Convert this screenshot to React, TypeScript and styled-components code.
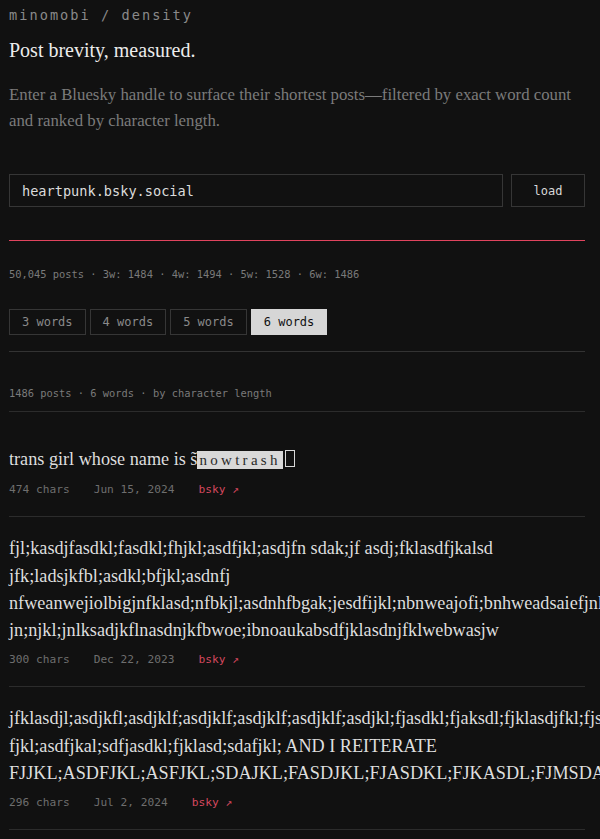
import React, { useState } from 'react';
import styled, { createGlobalStyle } from 'styled-components';

const mono = `"DejaVu Sans Mono", "Liberation Mono", monospace`;
const serif = `"Liberation Serif", "DejaVu Serif", serif`;

const GlobalStyle = createGlobalStyle`
  html, body {
    margin: 0;
    padding: 0;
    background: #111111;
    overflow-x: hidden;
  }
`;

const Page = styled.div`
  width: 576px;
  padding: 0 15px 40px 9px;
  color: #e2e2e2;
`;

const Brand = styled.div`
  font-family: ${mono};
  font-size: 13.6px;
  line-height: 20px;
  letter-spacing: 0.15em;
  color: #8a8a8a;
  margin-top: 5px;
`;

const Title = styled.h1`
  font-family: ${serif};
  font-weight: 400;
  font-size: 20px;
  line-height: 28px;
  margin: 11px 0 0;
  color: #ececec;
`;

const Intro = styled.p`
  font-family: ${serif};
  font-size: 16.8px;
  line-height: 26px;
  margin: 18px 0 0;
  color: #7b7b7b;
`;

const Form = styled.form`
  display: flex;
  gap: 8px;
  margin-top: 40px;
  height: 33px;
`;

const HandleInput = styled.input`
  flex: 1;
  box-sizing: border-box;
  background: #111111;
  border: 1px solid #363636;
  color: #dcdcdc;
  font-family: ${mono};
  font-size: 13.6px;
  padding: 0 12px;
  outline: none;
`;

const LoadButton = styled.button`
  width: 74px;
  background: #111111;
  border: 1px solid #363636;
  color: #d8d8d8;
  font-family: ${mono};
  font-size: 12px;
  cursor: pointer;
`;

const Progress = styled.div`
  height: 1px;
  background: #e0445e;
  margin-top: 33px;
`;

const Stats = styled.div<{ $top: number }>`
  font-family: ${mono};
  font-size: 10.4px;
  line-height: 16px;
  color: #7a7a7a;
  margin-top: ${(p) => p.$top}px;
`;

const Tabs = styled.div`
  display: flex;
  gap: 4px;
  margin-top: 27px;
  padding-bottom: 16px;
  border-bottom: 1px solid #333333;
`;

const Tab = styled.button<{ $active?: boolean }>`
  height: 26px;
  padding: 0 12px;
  font-family: ${mono};
  font-size: 12px;
  border: 1px solid ${(p) => (p.$active ? '#d6d6d6' : '#363636')};
  background: ${(p) => (p.$active ? '#d6d6d6' : '#111111')};
  color: ${(p) => (p.$active ? '#111111' : '#8a8a8a')};
  cursor: pointer;
`;

const Summary = styled(Stats)`
  padding-bottom: 10px;
  border-bottom: 1px solid #2c2c2c;
`;

const List = styled.div`
  padding-top: 16px;
`;

const Post = styled.article`
  padding: 18px 0;
  border-bottom: 1px solid #2c2c2c;
`;

const PostText = styled.div`
  font-family: ${serif};
  font-size: 18.2px;
  line-height: 27.3px;
  color: #dedede;
`;

// the handle renders as missing-glyph boxes in the original
const Glitch = styled.span`
  font-family: ${serif};
  font-size: 15px;
  background: #d8d8d8;
  color: #2a2a2a;
  padding: 1px 2px;
  letter-spacing: 0.22em;
`;

const Tofu = styled.span`
  display: inline-block;
  width: 8px;
  height: 15px;
  border: 1px solid #d8d8d8;
  margin-left: 2px;
  vertical-align: -2px;
`;

const Meta = styled.div`
  display: flex;
  gap: 24px;
  margin-top: 8px;
  font-family: ${mono};
  font-size: 11.2px;
  line-height: 16px;
  color: #6e6e6e;
`;

const BskyLink = styled.a`
  color: #d5485f;
  text-decoration: none;
`;

type Item = { text: React.ReactNode; chars: number; date: string };

const posts: Item[] = [
  {
    text: (
      <>
        trans girl whose name is s̃<Glitch>nowtrash</Glitch>
        <Tofu />
      </>
    ),
    chars: 474,
    date: 'Jun 15, 2024',
  },
  {
    text:
      'fjl;kasdjfasdkl;fasdkl;fhjkl;asdfjkl;asdjfn sdak;jf asdj;fklasdfjkalsd jfk;ladsjkfbl;asdkl;bfjkl;asdnfj nfweanwejiolbigjnfklasd;nfbkjl;asdnhfbgak;jesdfijkl;nbnweajofi;bnhweadsaiefjnkl;asdnjk jn;njkl;jnlksadjkflnasdnjkfbwoe;ibnoaukabsdfjklasdnjfklwebwasjw',
    chars: 300,
    date: 'Dec 22, 2023',
  },
  {
    text:
      'jfklasdjl;asdjkfl;asdjklf;asdjklf;asdjklf;asdjklf;asdjkl;fjasdkl;fjaksdl;fjklasdjfkl;fjsdkal;fjdksl fjkl;asdfjkal;sdfjasdkl;fjklasd;sdafjkl; AND I REITERATE FJJKL;ASDFJKL;ASFJKL;SDAJKL;FASDJKL;FJASDKL;FJKASDL;FJMSDAKL;FJDKSAL',
    chars: 296,
    date: 'Jul 2, 2024',
  },
];

const counts = ['3 words', '4 words', '5 words', '6 words'];

const App: React.FC = () => {
  const [handle, setHandle] = useState('heartpunk.bsky.social');
  const [active, setActive] = useState(3);

  return (
    <>
      <GlobalStyle />
      <Page>
        <Brand>minomobi / density</Brand>
        <Title>Post brevity, measured.</Title>
        <Intro>
          Enter a Bluesky handle to surface their shortest posts—filtered by exact word count and ranked by character length.
        </Intro>
        <Form onSubmit={(e) => e.preventDefault()}>
          <HandleInput value={handle} onChange={(e) => setHandle(e.target.value)} />
          <LoadButton type="submit">load</LoadButton>
        </Form>
        <Progress />
        <Stats $top={25}>50,045 posts · 3w: 1484 · 4w: 1494 · 5w: 1528 · 6w: 1486</Stats>
        <Tabs>
          {counts.map((c, i) => (
            <Tab key={c} $active={i === active} onClick={() => setActive(i)}>
              {c}
            </Tab>
          ))}
        </Tabs>
        <Summary $top={33}>1486 posts · 6 words · by character length</Summary>
        <List>
          {posts.map((p, i) => (
            <Post key={i}>
              <PostText>{p.text}</PostText>
              <Meta>
                <span>{p.chars} chars</span>
                <span>{p.date}</span>
                <BskyLink href="#">bsky ↗</BskyLink>
              </Meta>
            </Post>
          ))}
        </List>
      </Page>
    </>
  );
};

export default App;
